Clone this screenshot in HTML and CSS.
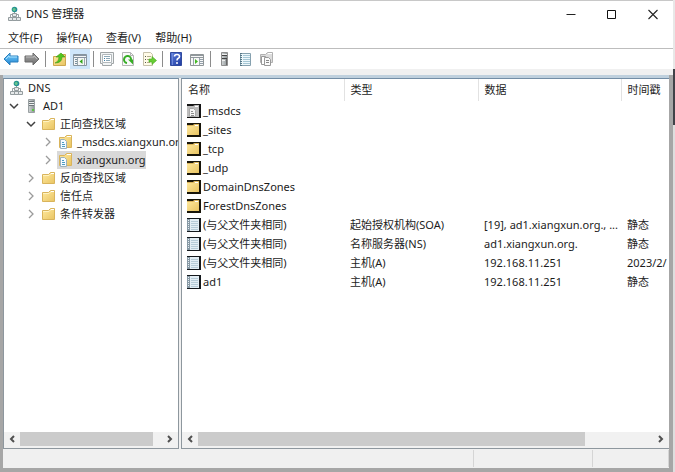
FILE: index.html
```html
<!DOCTYPE html>
<html lang="zh-CN">
<head>
<meta charset="utf-8">
<title>DNS 管理器</title>
<link rel="stylesheet" href="styles.css">
</head>
<body>
<svg class="sprite" aria-hidden="true">
  <defs>
    <linearGradient id="gold" x1="0" y1="0" x2="1" y2="1"><stop offset="0" stop-color="#ffeaa0"/><stop offset="1" stop-color="#e9c462"/></linearGradient>
    <linearGradient id="blue" x1="0" y1="0" x2="0" y2="1"><stop offset="0" stop-color="#7fd0fb"/><stop offset="1" stop-color="#1d84d2"/></linearGradient>
    <linearGradient id="grey" x1="0" y1="0" x2="0" y2="1"><stop offset="0" stop-color="#aaa"/><stop offset="1" stop-color="#6d6d6d"/></linearGradient>
    <linearGradient id="metal" x1="0" y1="0" x2="1" y2="0"><stop offset="0" stop-color="#d3d7d8"/><stop offset="1" stop-color="#8b9294"/></linearGradient>
    <linearGradient id="navy" x1="0" y1="0" x2="1" y2="1"><stop offset="0" stop-color="#5b7ddc"/><stop offset="1" stop-color="#1f3b9f"/></linearGradient>
  </defs>
  <symbol id="dns" viewBox="0 0 16 16">
    <path d="M8.500 5v4M4.500 11V8.500h8V11" fill="none" stroke="#9aa2a6"/>
    <path d="M6.500 7.500h4v3h-4zM2.500 11.500h4v3h-4zM10.500 11.500h4v3h-4zM6.500 11.500h4v3h-4z" fill="#e6e9ea" stroke="#949c9f"/>
    <circle cx="8.500" cy="3.500" r="2.800" fill="#26948f"/><path d="M6.500 3q2-2 3 0t-2 2z" fill="#69c58c"/><path d="M9.500 4.500l1.500-1-.5 2z" fill="#2474bd"/>
  </symbol>
  <symbol id="server" viewBox="0 0 16 16">
    <path d="M5.500 1.500h6v13h-6z" fill="url(#metal)" stroke="#9aa1a3"/>
    <path d="M6 3.500h5M6 5.500h5M6 7.500h5" stroke="#6f777a"/><path d="M6 4.500h5M6 6.500h5" stroke="#eef0f0"/>
    <rect x="9" y="11" width="2" height="2" fill="#58c83e"/>
  </symbol>
  <symbol id="tower" viewBox="0 0 16 16">
    <path d="M5.500 1.500h6v13h-6z" fill="url(#metal)" stroke="#8e8e8e"/><path d="M6 4.500h5M6 7.500h5" stroke="#444"/><path d="M6 3.500h5M6 9.500h3" stroke="#eee"/><path d="M10.500 8v6" stroke="#666"/>
  </symbol>
  <symbol id="folder" viewBox="0 0 16 16">
    <path d="M2.500 4.500h6l2-2h4v11h-12z" fill="url(#gold)" stroke="#d9b45c"/><path d="M3 5.500h6l2-2h3" fill="none" stroke="#fff3c1"/><path d="M11 3.500h3" stroke="#fff"/>
  </symbol>
  <symbol id="zone" viewBox="0 0 16 16">
    <path d="M2.500 3.500h5l2-2h5v12h-12z" fill="url(#gold)" stroke="#d9b45c"/><path d="M10 2.500h4" stroke="#fff"/>
    <path d="M3.500 5.500h4l2 2v7h-6z" fill="#f6fbff" stroke="#9ab1bd"/><path d="M5 8.500h2M5 10.500h3M5 12.500h3" stroke="#4b9cc3"/>
  </symbol>
  <symbol id="folder-lg" viewBox="0 0 14 14">
    <path d="M0 0h14v14H0z" fill="#171409"/><path d="M0 2h6l2-1h4v11H0z" fill="url(#gold)"/><path d="M0 2.500h6l2-1h4" fill="none" stroke="#d9b45c"/><path d="M8 2.500h3" stroke="#fff"/>
  </symbol>
  <symbol id="zone-grey" viewBox="0 0 14 14">
    <path d="M0 0h14v14H0z" fill="#151515"/><path d="M0 2h6l2-1h4v12H0z" fill="#bcbcbc"/><path d="M8 2.500h3" stroke="#fff"/><path d="M2.500 4.500h4l2 2v6h-6z" fill="#f5f5f5" stroke="#a9a9a9"/><path d="M4 7.500h2M4 9.500h3M4 11.500h3" stroke="#8d8d8d"/>
  </symbol>
  <symbol id="record" viewBox="0 0 14 14">
    <path d="M0 0h14v14H0z" fill="#15191d"/><path d="M0 1h12v12H0z" fill="#e3eef5"/><path d="M0 1h3v12H0z" fill="#8799a5"/><path d="M1.500 2v10" stroke="#e7eef2" stroke-dasharray="1 1"/><path d="M4 3.500h7M4 5.500h7M4 7.500h7M4 9.500h7M4 11.500h7" stroke="#b6cbd7"/>
  </symbol>
  <symbol id="back" viewBox="0 0 16 16"><path d="M1 8l6-6v3h8v6H7v3z" fill="url(#blue)" stroke="#2b7fbd"/><path d="M3 8l3-3v1h8" fill="none" stroke="#a5e1ff"/></symbol>
  <symbol id="forward" viewBox="0 0 16 16"><path d="M15 8L9 2v3H1v6h8v3z" fill="url(#grey)" stroke="#6b6b6b"/><path d="M2 6h8V5l3 3" fill="none" stroke="#bcbcbc"/></symbol>
  <symbol id="up" viewBox="0 0 16 16"><path d="M2.500 5.500h6l2-2h4v11h-12z" fill="url(#gold)" stroke="#cda750"/><path d="M4 12q4-1 4-6H5l5-4 4 4h-3q0 6-7 6z" fill="#52c51d" stroke="#3a9b17" stroke-width=".6"/></symbol>
  <symbol id="tree-pane" viewBox="0 0 16 16"><path d="M1.500 3.500h13v11h-13z" fill="#f5f6f6" stroke="#87949e"/><path d="M2 4.500h12M2 6.500h12" stroke="#8795a2"/><path d="M5.500 7v7M12.500 7v7" stroke="#9aa5ac"/><path d="M3 8.500h2M3 10.500h2M3 12.500h2" stroke="#78909f"/><path d="M10.500 8v5L7.500 10.500z" fill="#36a51d"/></symbol>
  <symbol id="action-pane" viewBox="0 0 16 16"><path d="M1.500 3.500h13v11h-13z" fill="#f8f8f8" stroke="#909698"/><path d="M2 4.500h12M2 6.500h12" stroke="#90989d"/><path d="M4.500 7v7M10.500 7v7" stroke="#9aa5ac"/><path d="M11 8.500h3M11 10.500h3M11 12.500h3" stroke="#94a0aa"/><path d="M6 8v5l3-2.500z" fill="#42b822"/></symbol>
  <symbol id="props" viewBox="0 0 16 16"><path d="M1.500 1.500h13v11h-2v2h-9v-2h-2z" fill="#f1f4f5" stroke="#a0a5a6"/><path d="M3.500 3.500h9v8h-9z" fill="#fff" stroke="#b3b9bc"/><path d="M5 5.500h6M7 7.500h4M7 9.500h4" stroke="#8da9b8"/><path d="M5 7.500h1M5 9.500h1" stroke="#3c7fa7"/></symbol>
  <symbol id="refresh" viewBox="0 0 16 16"><path d="M2.500 1.500h8l3 3v10h-11z" fill="#fafafa" stroke="#b5b5b5"/><path d="M10.500 1.500v3h3" fill="none" stroke="#b5b5b5"/><path d="M7 12a3.500 3.500 0 1 1 4-3" fill="none" stroke="#36ad24" stroke-width="2"/><path d="M8 8.500h5v5z" fill="#36ad24"/></symbol>
  <symbol id="export" viewBox="0 0 16 16"><path d="M2.500 1.500h7l2 2v11h-9z" fill="#fffbe7" stroke="#c6c1aa"/><path d="M4 5.500h1M4 8.500h1M4 11.500h1" stroke="#555"/><path d="M6 5.500h4M6 8.500h3M6 11.500h3" stroke="#b3ad8d"/><path d="M8 8h3V5.500l4.500 4-4.500 4V11H8z" fill="#68cd34" stroke="#45a81e" stroke-width=".6"/></symbol>
  <symbol id="help" viewBox="0 0 16 16"><path d="M2.500 1.500h11v13h-11z" fill="url(#navy)" stroke="#304a9f"/><path d="M4.500 2v12" stroke="#6d88d8"/><path d="M6.500 5.500q0-2 2.500-2 2.500 0 2.500 2 0 1.200-1.500 2-1 .6-1 2" fill="none" stroke="#fff" stroke-width="1.600"/><circle cx="9" cy="12" r="1" fill="#fff"/></symbol>
  <symbol id="notebook" viewBox="0 0 16 16"><path d="M3.500 2.500h10v12h-10z" fill="#edf8fc" stroke="#86a1af"/><path d="M4 2v13" stroke="#567786" stroke-width="2" stroke-dasharray="1 1"/><path d="M6 4.500h7M6 6.500h7M6 8.500h7M6 10.500h7M6 12.500h7" stroke="#a6c7d5"/></symbol>
  <symbol id="copies" viewBox="0 0 16 16"><path d="M2.500 3.500h5l2-2h5v10h-12z" fill="#dcdcdc" stroke="#b1b1b1"/><path d="M10 2.500h4" stroke="#fff"/><path d="M3.500 5.500h4v8h-4z" fill="#fff" stroke="#999"/><path d="M6.500 6.500h4l2 2v6h-6z" fill="#fafafa" stroke="#999"/><path d="M8 9.500h3M8 11.500h3" stroke="#888"/></symbol>
  <symbol id="open" viewBox="0 0 12 12"><path d="M2 4l4 4 4-4" fill="none" stroke="#404040" stroke-width="1.500"/></symbol>
  <symbol id="closed" viewBox="0 0 12 12"><path d="M4 2l4 4-4 4" fill="none" stroke="#9b9b9b" stroke-width="1.300"/></symbol>
  <symbol id="left" viewBox="0 0 12 12"><path d="M8 3L5 6l3 3" fill="none" stroke="#505050" stroke-width="2"/></symbol>
  <symbol id="right" viewBox="0 0 12 12"><path d="M4 3l3 3-3 3" fill="none" stroke="#505050" stroke-width="2"/></symbol>
</svg>

<div class="window">
  <header class="titlebar">
    <svg class="icon"><use href="#dns"/></svg>
    <h1 class="title">DNS 管理器</h1>
    <div class="controls">
      <button class="control" aria-label="最小化"><svg viewBox="0 0 12 12"><path d="M1.500 6.500h9" stroke="#222"/></svg></button>
      <button class="control" aria-label="最大化"><svg viewBox="0 0 12 12"><path d="M1.500 2.500h8v8h-8z" fill="none" stroke="#111"/></svg></button>
      <button class="control" aria-label="关闭"><svg viewBox="0 0 12 12"><path d="M1.500 2l9 9M10.500 2l-9 9" stroke="#222" stroke-width="1.100"/></svg></button>
    </div>
  </header>

  <nav class="menubar">
    <button class="menu">文件(F)</button>
    <button class="menu">操作(A)</button>
    <button class="menu">查看(V)</button>
    <button class="menu">帮助(H)</button>
  </nav>

  <div class="toolbar">
    <button class="tool" aria-label="后退"><svg class="icon"><use href="#back"/></svg></button>
    <button class="tool" aria-label="前进"><svg class="icon"><use href="#forward"/></svg></button>
    <span class="divider"></span>
    <button class="tool" aria-label="向上"><svg class="icon"><use href="#up"/></svg></button>
    <button class="tool active" aria-label="控制台树"><svg class="icon"><use href="#tree-pane"/></svg></button>
    <span class="divider"></span>
    <button class="tool" aria-label="属性"><svg class="icon"><use href="#props"/></svg></button>
    <button class="tool" aria-label="刷新"><svg class="icon"><use href="#refresh"/></svg></button>
    <button class="tool" aria-label="导出列表"><svg class="icon"><use href="#export"/></svg></button>
    <span class="divider"></span>
    <button class="tool" aria-label="帮助"><svg class="icon"><use href="#help"/></svg></button>
    <button class="tool" aria-label="操作窗格"><svg class="icon"><use href="#action-pane"/></svg></button>
    <span class="divider"></span>
    <button class="tool" aria-label="服务器"><svg class="icon"><use href="#tower"/></svg></button>
    <button class="tool" aria-label="记录"><svg class="icon"><use href="#notebook"/></svg></button>
    <button class="tool" aria-label="新建区域"><svg class="icon"><use href="#copies"/></svg></button>
  </div>

  <div class="frame">
    <main class="panes">
      <section class="pane tree-pane">
        <ul class="tree">
          <li><div class="node"><span class="item"><svg class="icon"><use href="#dns"/></svg>DNS</span></div></li>
          <li>
            <div class="node"><button class="toggle" aria-label="折叠"><svg><use href="#open"/></svg></button><span class="item"><svg class="icon"><use href="#server"/></svg>AD1</span></div>
            <ul class="branch">
              <li>
                <div class="node"><button class="toggle" aria-label="折叠"><svg><use href="#open"/></svg></button><span class="item"><svg class="icon"><use href="#folder"/></svg>正向查找区域</span></div>
                <ul class="branch">
                  <li><div class="node"><button class="toggle" aria-label="展开"><svg><use href="#closed"/></svg></button><span class="item"><svg class="icon"><use href="#zone"/></svg>_msdcs.xiangxun.or</span></div></li>
                  <li><div class="node"><button class="toggle" aria-label="展开"><svg><use href="#closed"/></svg></button><span class="item selected"><svg class="icon"><use href="#zone"/></svg>xiangxun.org</span></div></li>
                </ul>
              </li>
              <li><div class="node"><button class="toggle" aria-label="展开"><svg><use href="#closed"/></svg></button><span class="item"><svg class="icon"><use href="#folder"/></svg>反向查找区域</span></div></li>
              <li><div class="node"><button class="toggle" aria-label="展开"><svg><use href="#closed"/></svg></button><span class="item"><svg class="icon"><use href="#folder"/></svg>信任点</span></div></li>
              <li><div class="node"><button class="toggle" aria-label="展开"><svg><use href="#closed"/></svg></button><span class="item"><svg class="icon"><use href="#folder"/></svg>条件转发器</span></div></li>
            </ul>
          </li>
        </ul>
        <div class="scrollbar">
          <button class="arrow" aria-label="向左滚动"><svg><use href="#left"/></svg></button>
          <div class="track"><div class="thumb" style="width:94%"></div></div>
          <button class="arrow" aria-label="向右滚动"><svg><use href="#right"/></svg></button>
        </div>
      </section>

      <section class="pane list-pane">
        <div class="list">
          <table class="records">
            <colgroup><col class="col-name"><col class="col-type"><col class="col-data"><col></colgroup>
            <thead><tr><th>名称</th><th>类型</th><th>数据</th><th>时间戳</th></tr></thead>
            <tbody>
              <tr><td><span class="name"><svg><use href="#zone-grey"/></svg>_msdcs</span></td><td></td><td></td><td></td></tr>
              <tr><td><span class="name"><svg><use href="#folder-lg"/></svg>_sites</span></td><td></td><td></td><td></td></tr>
              <tr><td><span class="name"><svg><use href="#folder-lg"/></svg>_tcp</span></td><td></td><td></td><td></td></tr>
              <tr><td><span class="name"><svg><use href="#folder-lg"/></svg>_udp</span></td><td></td><td></td><td></td></tr>
              <tr><td><span class="name"><svg><use href="#folder-lg"/></svg>DomainDnsZones</span></td><td></td><td></td><td></td></tr>
              <tr><td><span class="name"><svg><use href="#folder-lg"/></svg>ForestDnsZones</span></td><td></td><td></td><td></td></tr>
              <tr><td><span class="name"><svg><use href="#record"/></svg>(与父文件夹相同)</span></td><td>起始授权机构(SOA)</td><td>[19], ad1.xiangxun.org., ...</td><td>静态</td></tr>
              <tr><td><span class="name"><svg><use href="#record"/></svg>(与父文件夹相同)</span></td><td>名称服务器(NS)</td><td>ad1.xiangxun.org.</td><td>静态</td></tr>
              <tr><td><span class="name"><svg><use href="#record"/></svg>(与父文件夹相同)</span></td><td>主机(A)</td><td>192.168.11.251</td><td>2023/2/</td></tr>
              <tr><td><span class="name"><svg><use href="#record"/></svg>ad1</span></td><td>主机(A)</td><td>192.168.11.251</td><td>静态</td></tr>
            </tbody>
          </table>
        </div>
        <div class="scrollbar">
          <button class="arrow" aria-label="向左滚动"><svg><use href="#left"/></svg></button>
          <div class="track"><div class="thumb" style="width:85%"></div></div>
          <button class="arrow" aria-label="向右滚动"><svg><use href="#right"/></svg></button>
        </div>
      </section>
    </main>
    <footer class="statusbar"><span class="status-main"></span><span class="status-mid"></span><span class="status-end"></span></footer>
  </div>
</div>
</body>
</html>
```
FILE: styles.css
```css
* { box-sizing: border-box; }

body {
  margin: 0;
  min-height: 100vh;
  display: flex;
  padding-right: 2px;
  background: linear-gradient(#e8e8e8 69px, #404248 69px, #404248 125px, #dedede 125px);
  color: #1c1c1c;
  font: 11px/18px "Noto Sans", "Noto Sans CJK SC", sans-serif;
}

button {
  margin: 0;
  padding: 0;
  border: 0;
  background: none;
  color: inherit;
  font: inherit;
}

ul { margin: 0; padding: 0; list-style: none; }
svg { display: block; flex: none; }

.sprite { position: absolute; width: 0; height: 0; }
.icon { width: 16px; height: 16px; }

.window {
  flex: 1;
  min-width: 0;
  display: flex;
  flex-direction: column;
  border-top: 1px solid #c8c8c8;
  background: #fff;
}

.titlebar {
  display: flex;
  align-items: center;
  gap: 4px;
  height: 26px;
  padding-left: 6px;
}
.title { margin: 0; font-size: 11px; font-weight: 400; }
.controls { display: flex; margin-left: auto; }
.control { display: grid; place-items: center; width: 41px; height: 24px; }
.control svg { width: 12px; height: 12px; }

.menubar { display: flex; gap: 14px; height: 22px; padding-left: 8px; border-bottom: 1px solid #bdbdbd; }

.toolbar {
  display: flex;
  align-items: center;
  gap: 1px;
  height: 20px;
  padding-left: 1px;
}
.tool { display: grid; place-items: center; width: 20px; height: 20px; }
.tool.active { background: #cfe6fa; }
.divider { width: 1px; height: 16px; margin: 0 2px; background: #8c8c8c; }

.frame {
  flex: 1;
  display: flex;
  flex-direction: column;
  border: solid #a6a6a6;
  border-width: 0 4px 4px 3px;
  background: #f0f0f0;
}
.panes {
  flex: 1;
  display: flex;
  gap: 2px;
  border-top: 3px solid #bfd0dd;
}
.toolbar { box-shadow: 0 6px #f0f0f0; margin-bottom: 6px; }
.pane {
  display: flex;
  flex-direction: column;
  min-width: 0;
  border: 1px solid #8e979e;
  border-top-color: #738da5;
  background: #fff;
}
.tree-pane { flex: 0 0 26%; min-width: 176px; }
.list-pane { flex: 1; border-right: 0; }

.tree { flex: 1; overflow: hidden; padding-left: 4px; }
.branch { padding-left: 17px; }
.node { display: flex; align-items: center; gap: 3px; height: 18px; white-space: nowrap; }
.toggle, .toggle svg { width: 12px; height: 12px; }
.item { display: flex; align-items: center; gap: 4px; height: 18px; }
.selected { background: #d9d9d9; }

.list { flex: 1; overflow: hidden; }
.records { width: 100%; table-layout: fixed; border-collapse: collapse; }
.col-name { width: 162px; }
.col-type { width: 134px; }
.col-data { width: 143px; }
.records th, .records td { padding: 0 0 0 6px; text-align: left; font-weight: 400; white-space: nowrap; }
.records th { height: 22px; border-right: 1px solid #e2e2e2; }
.records th:last-child { border-right: 0; }
.records td { height: 19px; line-height: 18px; }
.records td:first-child { padding-left: 5px; }
.name { display: flex; align-items: center; gap: 2px; }
.name svg { width: 14px; height: 14px; }

.scrollbar { display: flex; height: 16px; padding-bottom: 2px; background: #f1f1f1; }
.arrow { display: grid; place-items: center; width: 16px; }
.arrow svg { width: 12px; height: 12px; }
.track { flex: 1; }
.thumb { height: 100%; background: #cbcbcb; }

.statusbar { display: flex; height: 19px; }
.statusbar span { margin: 1px 0; border-right: 1px solid #d5d5d5; }
.status-main { flex: 1; }
.status-mid { width: 119px; }
.status-end { width: 76px; margin-right: 1px; }
```
